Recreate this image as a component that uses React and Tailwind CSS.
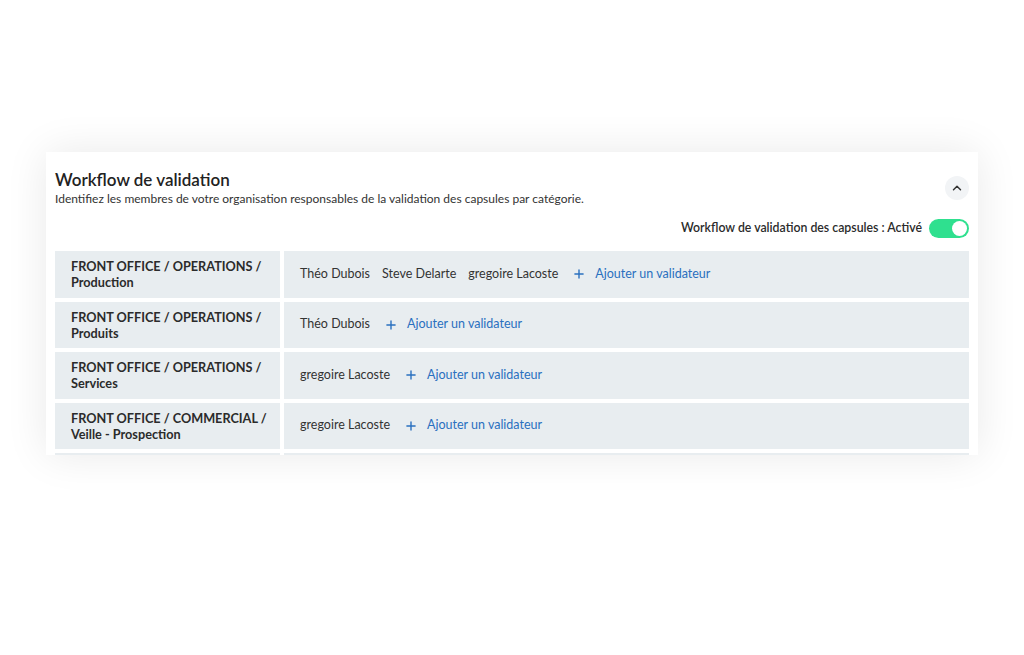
import { ChevronUp, Plus } from 'lucide-react';

const ROWS = [
  { cat: ['FRONT OFFICE / OPERATIONS /', 'Production'], users: ['Théo Dubois', 'Steve Delarte', 'gregoire Lacoste'] },
  { cat: ['FRONT OFFICE / OPERATIONS /', 'Produits'], users: ['Théo Dubois'] },
  { cat: ['FRONT OFFICE / OPERATIONS /', 'Services'], users: ['gregoire Lacoste'] },
  { cat: ['FRONT OFFICE / COMMERCIAL /', 'Veille - Prospection'], users: ['gregoire Lacoste'] },
];

function Row({ cat, users }) {
  return (
    <div className="flex gap-[4px] h-[46.5px] shrink-0">
      <div className="w-[225px] shrink-0 bg-[#e8edf0] pl-4 flex flex-col justify-center text-[12.7px] leading-[16px] font-bold text-[#2b2b2b]">
        <span>{cat[0]}</span>
        <span>{cat[1]}</span>
      </div>
      <div className="flex-1 bg-[#e8edf0] pl-4 flex items-center text-[12.5px] text-[#333]">
        <div className="flex items-center gap-[12px]">
          {users.map((u) => (
            <span key={u}>{u}</span>
          ))}
        </div>
        <button className="ml-[14px] flex items-center gap-[9px] text-[#2a70bf]">
          <Plus size={14} strokeWidth={2.4} className="text-[#2a70bf]" />
          <span>Ajouter un validateur</span>
        </button>
      </div>
    </div>
  );
}

export default function App() {
  return (
    <div className="min-h-[655px] bg-white pt-[152px] px-[46px] font-['Lato','Open_Sans',sans-serif]">
      <div className="h-[303px] overflow-hidden bg-white shadow-[0_0_40px_rgba(0,0,0,0.09)] px-[9px] pt-[18px]">
        {/* Header */}
        <div className="flex items-start justify-between">
          <div>
            <h2 className="text-[17px] leading-[20px] font-semibold text-[#222]">Workflow de validation</h2>
            <p className="text-[12px] leading-[16px] text-[#333] mt-[1px]">
              Identifiez les membres de votre organisation responsables de la validation des capsules par catégorie.
            </p>
          </div>
          <button className="mt-[6px] w-[24px] h-[24px] rounded-full bg-[#f2f4f6] flex items-center justify-center text-[#333]">
            <ChevronUp size={14} strokeWidth={2.5} />
          </button>
        </div>

        {/* Toggle */}
        <div className="flex items-center justify-end gap-[7px] mt-[12px]">
          <span className="text-[12.3px] font-semibold text-[#2b2b2b]">Workflow de validation des capsules : Activé</span>
          <div className="w-[40px] h-[19px] rounded-full bg-[#2fe08f] flex items-center justify-end px-[2px]">
            <div className="w-[15px] h-[15px] rounded-full bg-white" />
          </div>
        </div>

        {/* Table */}
        <div className="mt-[13px] flex flex-col gap-[4px]">
          {ROWS.map((r, i) => (
            <Row key={i} {...r} />
          ))}
          <div className="flex gap-[4px] h-[47px] shrink-0">
            <div className="w-[225px] shrink-0 bg-[#e8edf0]" />
            <div className="flex-1 bg-[#e8edf0]" />
          </div>
        </div>
      </div>
    </div>
  );
}
